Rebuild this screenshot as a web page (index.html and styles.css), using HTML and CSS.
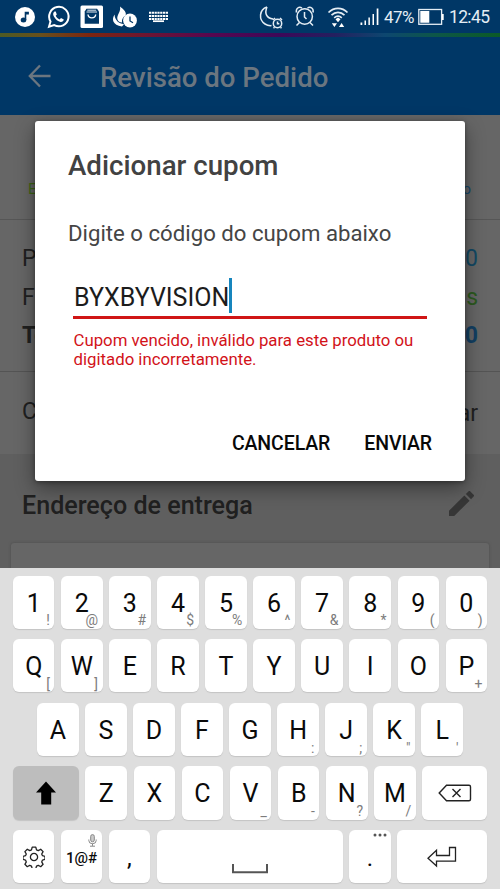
FILE: index.html
```html
<!DOCTYPE html>
<html lang="pt-BR">
<head>
<meta charset="utf-8">
<title>Revisão do Pedido</title>
<link rel="stylesheet" href="styles.css">
</head>
<body>
<div class="phone">
  <header class="status">
    <svg class="status-icons" width="180" height="33" viewBox="0 0 180 33">
      <circle cx="25" cy="17" r="10" fill="#fff"/>
      <ellipse cx="23.500" cy="20" rx="2.800" ry="2.500" fill="#003766"/>
      <path d="M24.700 20v-8.200h4.200v2.600h-2.600V20z" fill="#003766"/>
      <path d="M49 26.800l1.500-5.300a9.700 9.700 0 1 1 3.700 3.600z" fill="none" stroke="#fff" stroke-width="2"/>
      <path d="M54.500 11.500c-1.500 1-1.800 3-.6 5 1.700 3 4 5 6.700 5.500 1.500.2 3-.8 3.200-2.500l-2.800-1.500-1.400 1.500c-1.800-.8-3-2-3.900-3.700l1.100-1.400-1.100-2.800z" fill="#fff"/>
      <rect x="80.500" y="5.500" width="22.500" height="22.500" rx="1.500" fill="#fff"/>
      <path d="M86.500 8.700h10.500l2 2.800v12.300H84.700V11.500z" fill="#003766"/>
      <path d="M87.300 10.200h8.900M86.500 12h10.500" stroke="#fff" stroke-width=".9"/>
      <path d="M88 14.500c.5 4.500 7.200 4.500 7.700 0" fill="none" stroke="#fff" stroke-width="1.400"/>
      <path d="M120 6.500c4 3 7 6 5.500 9-2.500 1.500-4 4-3.500 7-4.500-.2-5.500-4-4.200-7 1-2.800 3-5 2.200-9z" fill="#fff"/>
      <path d="M114.500 14.500c-3 5-2 10.500 7.500 12l2-2.300c-5-.7-9-3.500-9.500-9.700z" fill="#fff"/>
      <circle cx="130" cy="20.500" r="6.900" fill="#fff"/>
      <path d="M130 16.500v4.500l3 1.800" fill="none" stroke="#003766" stroke-width="1.300"/>
      <path d="M149 12.800h19M149 16h19M149 19h19" stroke="#fff" stroke-width="2" stroke-dasharray="2.200 .6"/>
      <path d="M153 21.200h11" stroke="#fff" stroke-width="1.700"/>
    </svg>
    <svg class="status-icons" width="125" height="33" viewBox="255 0 125 33">
      <g fill="none" stroke="#e4edf4" stroke-width="1.500">
        <path d="M267 7c-8 2.500-8.500 13-2 17 2 1.300 4.200 1.800 6.500 1.600M267 7c-2.800 6.500-.3 11.300 6 12"/>
        <circle cx="277.500" cy="23.500" r="4.200"/><path d="M277.500 21.500v2.300h1.800M273 20l2-2M282 20l-2-2M274.500 27.200l-1 1M280.500 27.200l1 1"/>
        <circle cx="304.700" cy="16.500" r="7.700"/><path d="M304.500 12v5l2 2M296.500 12.500c-1-4 2.500-6.500 5.500-4.500M313 12.500c1-4-2.500-6.500-5.500-4.500M299.500 22.500l-3 3M310 22.500l3 3"/>
        <path d="M328.500 12.500c5.500-5.600 13.500-5.600 19 0M331.500 15.200c3.800-3.700 9.200-3.700 13 0M334.200 17.800c2.300-2 5.300-2 7.600 0" stroke-width="1.700"/>
      </g>
      <path d="M335.500 19.200l2.500-1.800 2.500 1.800-2.500 3zM331.800 23.200h5.200l-2.600 3.800zM339 27h5.200l-2.600-4zM360.500 22.500h1.800V25h-1.800zM364.500 20.500h1.500V25h-1.500zM368.400 17.500h1.500V25h-1.500zM372.500 14h1.500v11h-1.500zM376.700 8.500h1.700V25h-1.700z" fill="#fff"/>
    </svg>
    <span class="percent">47%</span>
    <svg class="battery" width="26" height="18" viewBox="0 0 26 18">
      <rect x=".8" y="1.500" width="22.800" height="14.800" fill="none" stroke="#e4edf4" stroke-width="1.300"/>
      <path d="M2.300 3h9v11.800h-9zM24 6h1.700v6H24z" fill="#fff"/>
    </svg>
    <span class="clock">12:45</span>
  </header>
  <div class="rainbow"></div>
  <div class="appbar">
    <svg width="24" height="24" viewBox="0 0 24 24" fill="none" stroke="#6b7680" stroke-width="2.300"><path d="M22.500 12H2M12 1.500L1.800 12 12 22.500"/></svg>
    <h1>Revisão do Pedido</h1>
  </div>
  <main class="page">
    <section class="steps"><span class="done">E</span><span class="next">o</span></section>
    <section class="totals">
      <div class="row"><span>P</span><span class="teal">0</span></div>
      <div class="row"><span>F</span><span class="green">s</span></div>
      <div class="row total"><span>To</span><span class="blue">0</span></div>
    </section>
    <section class="coupon"><span>C</span><span class="link">ar</span></section>
    <section class="address">
      <div class="address-head">
        <h2>Endereço de entrega</h2>
        <svg width="25" height="25" viewBox="3 3 18 18" fill="#363636"><path d="M3 17.250V21h3.750L17.810 9.940l-3.750-3.750L3 17.250zM20.710 7.040a1 1 0 0 0 0-1.410l-2.340-2.340a1 1 0 0 0-1.410 0l-1.830 1.830 3.750 3.750 1.830-1.830z"/></svg>
      </div>
      <div class="card"></div>
    </section>
  </main>

  <div class="keyboard">
    <div class="keys">
      <div class="key">1<i>!</i></div><div class="key">2<i>@</i></div><div class="key">3<i>#</i></div><div class="key">4<i>$</i></div><div class="key">5<i>%</i></div><div class="key">6<i>^</i></div><div class="key">7<i>&amp;</i></div><div class="key">8<i>*</i></div><div class="key">9<i>(</i></div><div class="key">0<i>)</i></div>
    </div>
    <div class="keys">
      <div class="key">Q<i>[</i></div><div class="key">W<i>]</i></div><div class="key">E</div><div class="key">R</div><div class="key">T</div><div class="key">Y</div><div class="key">U</div><div class="key">I</div><div class="key">O</div><div class="key">P<i>+</i></div>
    </div>
    <div class="keys inset">
      <div class="key">A</div><div class="key">S</div><div class="key">D</div><div class="key">F</div><div class="key">G</div><div class="key">H<i>:</i></div><div class="key">J<i>;</i></div><div class="key">K<i>"</i></div><div class="key">L<i>'</i></div>
    </div>
    <div class="keys">
      <div class="key shift"><svg width="20" height="24" viewBox="0 0 20 24"><path d="M10 .5L20 11.500h-4.800v12H5.200v-12H0z"/></svg></div>
      <div class="key">Z</div><div class="key">X</div><div class="key">C</div><div class="key">V<i>_</i></div><div class="key">B<i>-</i></div><div class="key">N<i>?</i></div><div class="key">M<i>/</i></div>
      <div class="key erase"><svg width="34" height="18" viewBox="0 0 34 18" fill="none" stroke="#222" stroke-width="1.400"><path d="M1.200 9L8.500 1.300H31q1.500 0 1.500 1.500v12.400q0 1.500-1.500 1.500H8.500zM14.500 5l8 8M22.500 5l-8 8"/></svg></div>
    </div>
    <div class="keys">
      <div class="key gear"><svg width="22" height="22" viewBox="-11 -11 22 22" fill="none" stroke="#222" stroke-width="1.300" stroke-linejoin="round"><path d="M-1.800-9.800h3.600l.7 2.600 1.800.8 2.400-1.400 2.400 2.400-1.400 2.400.8 1.700 2.500.6v3.100l-2.500.7-.8 1.800 1.400 2.400-2.400 2.400-2.400-1.400-1.800.8-.7 2.600h-3.600l-.7-2.600-1.800-.8-2.400 1.400-2.400-2.400 1.400-2.400-.8-1.800-2.500-.7v-3.100l2.500-.6.8-1.700-1.400-2.400 2.400-2.400 2.400 1.400 1.800-.8z"/><circle r="3.600"/></svg></div>
      <div class="key symbols">1@#<svg class="mic" width="9" height="13" viewBox="0 0 9 13" fill="none" stroke="#888"><rect x="2.700" y=".6" width="3.600" height="7.200" rx="1.800" fill="#ccc"/><path d="M.8 5.500v1a3.700 3.200 0 0 0 7.400 0v-1M4.500 9.700v2.200M2 12.200h5"/></svg></div>
      <div class="key comma">,</div>
      <div class="key space"><svg width="36" height="10" viewBox="0 0 36 10" fill="none" stroke="#555" stroke-width="2"><path d="M1 0v8.300h34V0"/></svg></div>
      <div class="key dot">.<svg class="more" width="14" height="4" viewBox="0 0 14 4" fill="#555"><circle cx="2" cy="2" r="1.500"/><circle cx="7" cy="2" r="1.500"/><circle cx="12" cy="2" r="1.500"/></svg></div>
      <div class="key enter"><svg width="30" height="22" viewBox="0 0 30 22" fill="none" stroke="#222" stroke-width="1.300"><path d="M1 12.300L9.500 4.200v5.300h13V1.500h6v13.600h-19v5z"/></svg></div>
    </div>
  </div>

  <div class="dialog">
    <h3>Adicionar cupom</h3>
    <p class="prompt">Digite o código do cupom abaixo</p>
    <div class="field"><span>BYXBYVISION</span><b class="caret"></b></div>
    <p class="error">Cupom vencido, inválido para este produto ou<br>digitado incorretamente.</p>
    <div class="actions"><span>CANCELAR</span><span>ENVIAR</span></div>
  </div>
</div>
</body>
</html>
```
FILE: styles.css
```css
* { box-sizing: border-box; margin: 0; padding: 0; }
body { width: 500px; height: 889px; overflow: hidden; font-family: Roboto, sans-serif; background: #666; }
h1, h2, h3 { font-weight: 500; white-space: nowrap; }
svg { display: block; flex: none; }
.phone { position: relative; width: 500px; height: 889px; display: flex; flex-direction: column; overflow: hidden; }

.status { height: 33px; background: #003766; color: #e4edf4; display: flex; align-items: center; flex: none; }
.status-icons + .status-icons { margin-left: 75px; }
.percent { width: 34px; margin-left: 4px; font-size: 17px; line-height: 34px; padding-top: 1px; letter-spacing: -.5px; }
.clock { margin-left: 5px; font-size: 17.500px; line-height: 34px; padding-top: 1px; letter-spacing: -.65px; }
.rainbow { height: 4px; flex: none; background: linear-gradient(90deg, #4d5a24 0, #67501c 8%, #7c2510 18%, #6b1434 30%, #57074f 42%, #3d0858 56%, #24205f 67%, #0d4770 77%, #0d5648 87%, #0b5a27 100%); }
.appbar { height: 78px; flex: none; background: #003766; display: flex; align-items: center; padding: 0 28px; gap: 48px; color: #6b7680; }
.appbar h1 { font-size: 27.600px; line-height: 34px; padding-top: 3px; }

.page { height: 453px; flex: none; background: #666; color: #202020; overflow: hidden; }
.steps { height: 105px; padding: 64px 29px 0 28px; display: flex; justify-content: space-between; font-size: 15px; line-height: 20px; border-bottom: 1.500px solid #565656; }
.done { color: #3d6415; }
.next { color: #17496b; }
.totals { height: 152px; padding: 20px 22px 0; border-bottom: 1.500px solid #545454; font-size: 23px; }
.row { display: flex; justify-content: space-between; line-height: 38.500px; }
.total { font-weight: 700; }
.teal { color: #124863; }
.green { color: #2c591f; }
.blue { color: #123f62; }
.coupon { height: 82px; padding: 21px 22px; display: flex; justify-content: space-between; font-size: 23px; line-height: 38px; }
.link { padding-top: 2px; }
.address { background: #5f5f5f; height: 114px; padding: 0 11px; }
.address-head { height: 89px; padding: 12px 15px 0 11px; display: flex; align-items: center; justify-content: space-between; }
.address-head h2 { font-size: 25.100px; padding-top: 2px; }
.address-head svg { margin-top: -2px; }
.card { height: 40px; background: #666; border-radius: 3px; box-shadow: 0 0 3px #4c4c4c; }

.keyboard { height: 321px; flex: none; background: #dedede; padding: 7.500px 13px 0; display: flex; flex-direction: column; gap: 10.200px; }
.keys { display: flex; gap: 6.600px; height: 53.400px; flex: none; }
.inset { padding: 0 24.100px; }
.key { position: relative; flex: 1 1 0; min-width: 0; height: 53.400px; background: #fff; border-radius: 6px; box-shadow: 0 1px 1px #c4c4c4; display: flex; align-items: center; justify-content: center; padding-top: 2px; font-size: 25px; color: #0a0a0a; }
.key i { position: absolute; right: 4.500px; bottom: 1.500px; font-size: 14px; line-height: 14px; font-style: normal; color: #7c7c7c; }
.shift { flex: 0 0 65.900px; background: #bdbdbd; }
.shift, .erase { padding-top: 1px; }
.gear { padding-top: 0; }
.erase { flex: 0 0 64.800px; }
.symbols { font-size: 15px; font-weight: 500; }
.mic { position: absolute; right: 5px; top: 4px; }
.comma, .dot { font-size: 24px; }
.space { flex: 0 0 186.200px; align-items: flex-end; padding-bottom: 9px; }
.more { position: absolute; right: 4px; top: 3px; }
.enter { flex: 0 0 89.800px; padding-top: 0; }

.dialog { position: absolute; left: 35px; top: 120.500px; width: 430px; height: 360.500px; background: #fff; border-radius: 3px; box-shadow: 0 7px 20px rgba(0,0,0,.4), 0 1px 4px rgba(0,0,0,.35); padding: 28px 33px 0; }
.dialog h3 { font-size: 27.700px; line-height: 34px; color: #424242; }
.prompt { margin-top: 35px; font-size: 22.200px; line-height: 30px; color: #454545; white-space: nowrap; }
.field { margin: 29px 5px 0; height: 42px; border-bottom: 3px solid #d01515; display: flex; align-items: center; font-size: 25px; color: #1c1c1c; }
.field span { padding: 3px 0 0 1px; }
.caret { width: 3px; height: 35px; margin-top: -1px; background: #1685bd; }
.error { margin: 12px 5px 0 5.500px; font-size: 16.800px; line-height: 19.500px; color: #d21219; white-space: nowrap; }
.actions { margin-top: 60px; display: flex; justify-content: flex-end; gap: 34px; font-size: 19.500px; line-height: 28px; letter-spacing: -.1px; font-weight: 500; color: #080808; }
```
